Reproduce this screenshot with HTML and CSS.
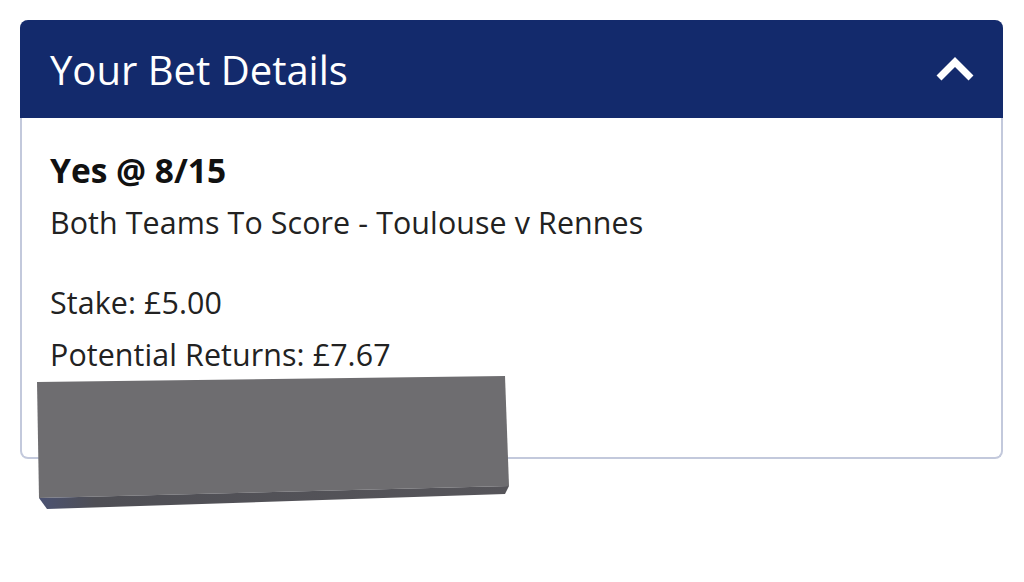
FILE: index.html
```html
<!DOCTYPE html>
<html lang="en-GB">
<head>
    <meta charset="utf-8">
    <title>Your Bet Details</title>
    <link rel="stylesheet" href="styles.css">
</head>
<body>
    <section class="bet-card">
        <header class="bet-head">
            <h1>Your Bet Details</h1>
            <svg class="chevron" width="40" height="26" viewBox="0 0 40 26">
                <polyline points="4,22 20,6 36,22" fill="none" stroke="#ffffff" stroke-width="7" stroke-linejoin="miter"/>
            </svg>
        </header>
        <div class="bet-body">
            <h2 class="selection">Yes @ 8/15</h2>
            <p class="line">Both Teams To Score - Toulouse v Rennes</p>
            <p class="line stake">Stake: £5.00</p>
            <p class="line">Potential Returns: £7.67</p>
        </div>
        <!-- redacted area -->
        <svg class="redact" width="480" height="140" viewBox="0 0 480 140">
            <defs>
                <linearGradient id="edge" x1="0" y1="0" x2="1" y2="0">
                    <stop offset="0" stop-color="#4b5272"/>
                    <stop offset="0.12" stop-color="#4f4f55"/>
                    <stop offset="1" stop-color="#56555a"/>
                </linearGradient>
            </defs>
            <polygon points="0,6 468,0 472,110 2,122" fill="#6e6d70"/>
            <polygon points="2,122 472,110 468,118 10,133" fill="url(#edge)"/>
        </svg>
    </section>
</body>
</html>
```

FILE: styles.css
```css
html {
    min-height: 100%;
}
body {
    margin: 0;
    min-height: 582px;
    padding: 20px 21px 0 20px;
    box-sizing: border-box;
    background: #ffffff;
    font-family: "Open Sans", "Noto Sans", sans-serif;
    color: #222222;
}
.bet-card {
    position: relative;
    border: 2px solid #c3c9dc;
    border-top: none;
    border-radius: 8px;
    height: 439px;
    box-sizing: border-box;
}
.bet-head {
    display: flex;
    align-items: center;
    justify-content: space-between;
    height: 98px;
    margin: 0 -2px;
    padding: 0 28px 0 30px;
    background: #132a6c;
    border-radius: 8px 8px 0 0;
}
.bet-head h1 {
    margin: 0;
    color: #ffffff;
    font-size: 40px;
    font-weight: 400;
}
.chevron {
    display: block;
}
.bet-body {
    padding: 26px 28px 0 28px;
}
.selection {
    margin: 0 0 1px 0;
    font-size: 33.5px;
    font-weight: 700;
    line-height: 52px;
    color: #111111;
}
.line {
    margin: 0;
    font-size: 30.4px;
    letter-spacing: 0.1px;
    line-height: 52px;
}
.stake {
    margin-top: 28px;
}
.redact {
    position: absolute;
    left: 15px;
    top: 356px;
}
```
